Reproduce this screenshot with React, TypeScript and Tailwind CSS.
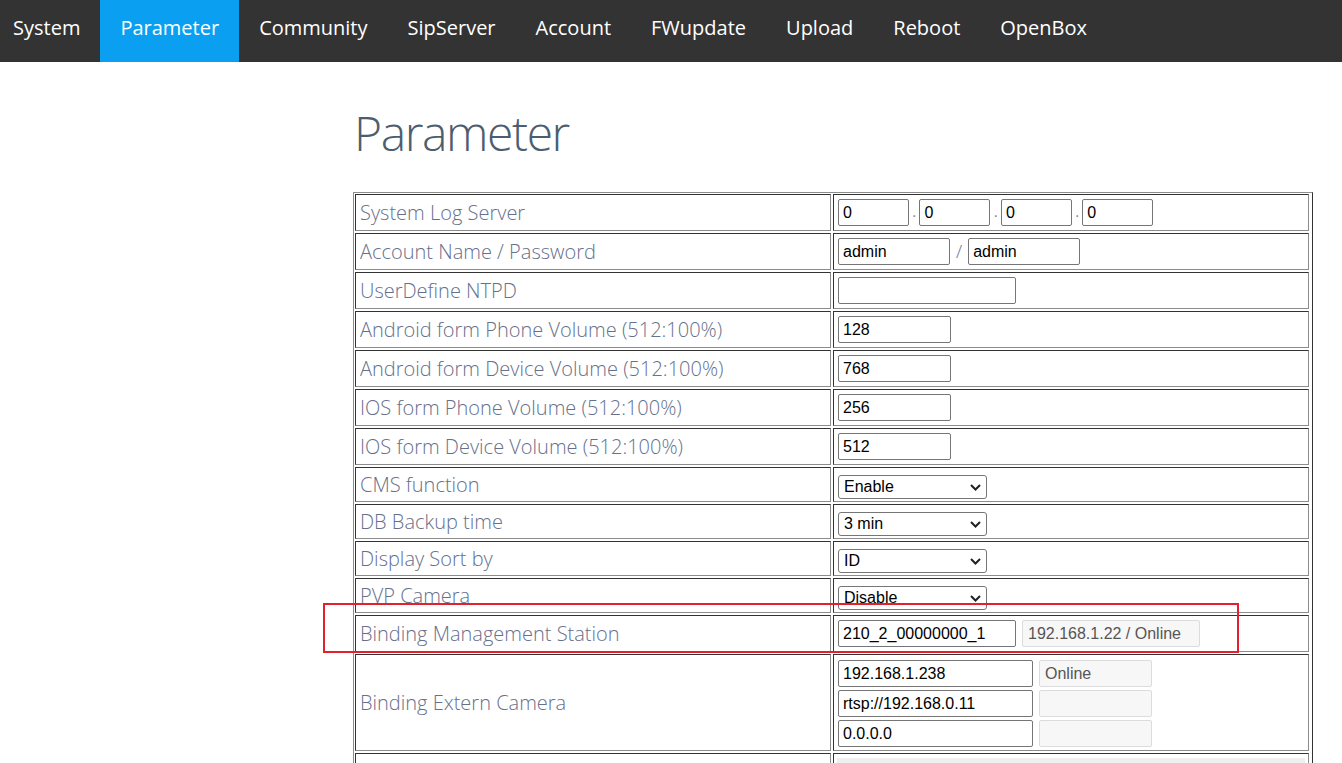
import React from "react";

const navItems = ["System", "Parameter", "Community", "SipServer", "Account", "FWupdate", "Upload", "Reboot", "OpenBox"];

const cellBorder =
  "border border-t-[#333333] border-l-[#333333] border-r-[#8c8c8c] border-b-[#8c8c8c]";

function Label({ text, h }: { text?: string; h: string }) {
  return (
    <div className={`${cellBorder} ${h} flex items-center pl-[4px] text-[20px] font-light text-[#66708c] font-['Open_Sans',sans-serif] whitespace-nowrap`}>
      {text}
    </div>
  );
}

function TextBox({ value, w }: { value: string; w: string }) {
  return (
    <div className={`${w} h-[27px] border border-[#767676] rounded-[2px] bg-white flex items-center pl-[4px] text-[16px] text-black font-['Liberation_Sans',Arial,sans-serif]`}>
      {value}
    </div>
  );
}

function ReadBox({ value, w }: { value: string; w: string }) {
  return (
    <div className={`${w} h-[27px] border border-[#dcdcdc] rounded-[2px] bg-[#f7f7f7] flex items-center pl-[5px] text-[16px] text-[#555555] font-['Liberation_Sans',Arial,sans-serif]`}>
      {value}
    </div>
  );
}

function SelectBox({ value }: { value: string }) {
  return (
    <div className="relative w-[149px] h-[24px] border border-[#767676] rounded-[3px] bg-white flex items-center pl-[5px] text-[16px] text-black font-['Liberation_Sans',Arial,sans-serif]">
      {value}
      <svg className="absolute right-[5px] top-[8px]" width="11" height="7" viewBox="0 0 11 7">
        <path d="M1 1l4.5 4.5L10 1" fill="none" stroke="#222" strokeWidth="2" />
      </svg>
    </div>
  );
}

function Value({ h, children, select }: { h: string; children?: React.ReactNode; select?: boolean }) {
  return (
    <div className={`${cellBorder} ${h} flex ${select ? "items-start pt-[7px]" : "items-center"} pl-[4px]`}>
      {children}
    </div>
  );
}

function Dot() {
  return <span className="mx-[3px] self-end mb-[6px] text-[16px] text-[#888] font-['Liberation_Sans',Arial,sans-serif]">.</span>;
}

export default function App() {
  return (
    <div className="relative min-h-[763px] bg-white font-['Open_Sans',sans-serif]">
      <nav className="h-[62px] bg-[#333333] flex">
        {navItems.map((item, i) => (
          <div
            key={item}
            className={`h-full pt-[14px] text-[20px] text-white leading-[27px] ${i === 0 ? "pl-[13px] pr-[20px]" : "px-[20px]"} ${item === "Parameter" ? "bg-[#0a9ff0]" : ""}`}
          >
            {item}
          </div>
        ))}
      </nav>

      <div className="ml-[353px] w-[960px]">
        <h1 className="mt-[38px] pl-[1px] text-[48px] font-light tracking-[-1.4px] text-[#4d5d70] leading-[65px]">Parameter</h1>

        <div className="mt-[27px] border border-t-[#8c8c8c] border-l-[#8c8c8c] border-r-[#333333] border-b-[#333333] p-[1px] grid grid-cols-[476px_476px] gap-[2px]">
          <Label text="System Log Server" h="h-[37px]" />
          <Value h="h-[37px]">
            <TextBox value="0" w="w-[71px]" />
            <Dot />
            <TextBox value="0" w="w-[71px]" />
            <Dot />
            <TextBox value="0" w="w-[71px]" />
            <Dot />
            <TextBox value="0" w="w-[71px]" />
          </Value>

          <Label text="Account Name / Password" h="h-[37px]" />
          <Value h="h-[37px]">
            <TextBox value="admin" w="w-[112px]" />
            <span className="mx-[6px] text-[18px] font-light text-[#66708c]">/</span>
            <TextBox value="admin" w="w-[112px]" />
          </Value>

          <Label text="UserDefine NTPD" h="h-[37px]" />
          <Value h="h-[37px]">
            <TextBox value="" w="w-[178px]" />
          </Value>

          <Label text="Android form Phone Volume (512:100%)" h="h-[37px]" />
          <Value h="h-[37px]">
            <TextBox value="128" w="w-[113px]" />
          </Value>

          <Label text="Android form Device Volume (512:100%)" h="h-[37px]" />
          <Value h="h-[37px]">
            <TextBox value="768" w="w-[113px]" />
          </Value>

          <Label text="IOS form Phone Volume (512:100%)" h="h-[37px]" />
          <Value h="h-[37px]">
            <TextBox value="256" w="w-[113px]" />
          </Value>

          <Label text="IOS form Device Volume (512:100%)" h="h-[37px]" />
          <Value h="h-[37px]">
            <TextBox value="512" w="w-[113px]" />
          </Value>

          <Label text="CMS function" h="h-[35px]" />
          <Value h="h-[35px]" select>
            <SelectBox value="Enable" />
          </Value>

          <Label text="DB Backup time" h="h-[35px]" />
          <Value h="h-[35px]" select>
            <SelectBox value="3 min" />
          </Value>

          <Label text="Display Sort by" h="h-[35px]" />
          <Value h="h-[35px]" select>
            <SelectBox value="ID" />
          </Value>

          <Label text="PVP Camera" h="h-[35px]" />
          <Value h="h-[35px]" select>
            <SelectBox value="Disable" />
          </Value>

          <Label text="Binding Management Station" h="h-[37px]" />
          <Value h="h-[37px]">
            <div className="flex gap-[6px]">
              <TextBox value="210_2_00000000_1" w="w-[178px]" />
              <ReadBox value="192.168.1.22 / Online" w="w-[178px]" />
            </div>
          </Value>

          <Label text="Binding Extern Camera" h="h-[97px]" />
          <div className={`${cellBorder} h-[97px] pl-[4px] pt-[5px] flex flex-col gap-[3px]`}>
            <div className="flex gap-[6px]">
              <TextBox value="192.168.1.238" w="w-[195px]" />
              <ReadBox value="Online" w="w-[113px]" />
            </div>
            <div className="flex gap-[6px]">
              <TextBox value="rtsp://192.168.0.11" w="w-[195px]" />
              <ReadBox value="" w="w-[113px]" />
            </div>
            <div className="flex gap-[6px]">
              <TextBox value="0.0.0.0" w="w-[195px]" />
              <ReadBox value="" w="w-[113px]" />
            </div>
          </div>

          <Label h="h-[40px]" />
          <div className={`${cellBorder} h-[40px] pl-[3px] pr-[3px] pt-[4px]`}>
            <div className="h-[30px] bg-[#efefef]" />
          </div>
        </div>
      </div>

      {/* red annotation frame */}
      <div className="absolute left-[323px] top-[603px] w-[916px] h-[50px] border-2 border-[#e3202b] pointer-events-none" />
    </div>
  );
}
